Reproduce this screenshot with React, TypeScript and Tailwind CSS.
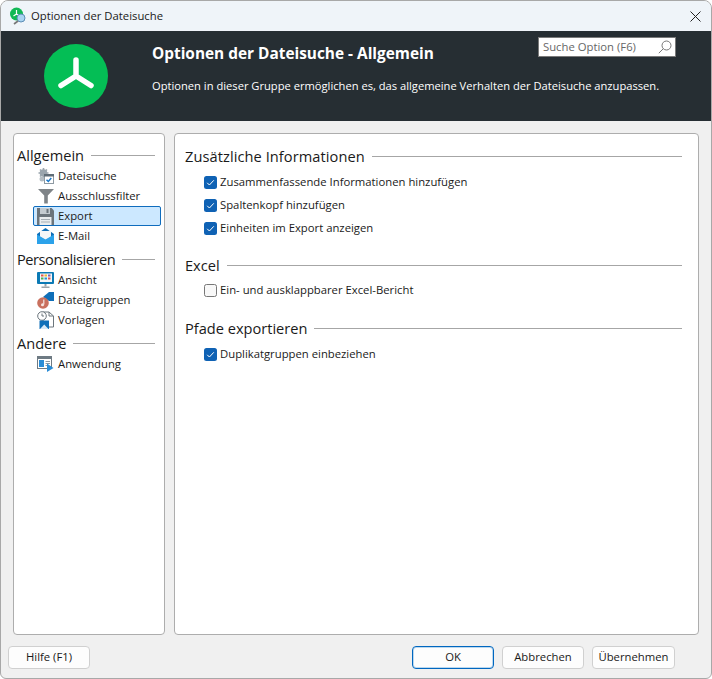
const font = { fontFamily: '"Open Sans", "Noto Sans", sans-serif' };

function Logo() {
  return (
    <svg width="64" height="64" viewBox="0 0 64 64">
      <circle cx="32" cy="32" r="32" fill="#04BE55" />
      <path d="M32 16V32M32 32L17 41.5M32 32L47 41.5" stroke="#fff" strokeWidth="5.5" strokeLinecap="round" fill="none" />
    </svg>
  );
}

function AppIcon() {
  return (
    <svg width="18" height="18" viewBox="0 0 18 18">
      <circle cx="7.5" cy="7" r="6.5" fill="#12b856" />
      <path d="M7.5 3V7M7.5 7L4.5 9M7.5 7L10.5 9" stroke="#fff" strokeWidth="1.2" fill="none" />
      <circle cx="12" cy="11" r="4" fill="#a9d4f2" stroke="#5d8db5" strokeWidth="1" />
      <path d="M9 14L5 17" stroke="#777" strokeWidth="1.6" />
    </svg>
  );
}

function GearsIcon() {
  return (
    <svg width="16" height="16" viewBox="0 0 16 16">
      <circle cx="5.5" cy="5" r="3.8" fill="#9aa5ad" />
      <circle cx="5.5" cy="5" r="1.3" fill="#dfe3e6" />
      <path d="M5.5 0V10M0.5 5H10.500M2 1.500L9 8.500M9 1.500L2 8.500" stroke="#9aa5ad" strokeWidth="1.600" />
      <circle cx="4" cy="11" r="2.500" fill="#b4bdc3" />
      <rect x="6.500" y="6.500" width="9" height="9" fill="#fff" stroke="#8e9aa3" />
      <rect x="6" y="6" width="10" height="2.500" fill="#5f6d77" />
      <path d="M8.500 11.800L10.300 13.500L13.300 10" stroke="#1b78c8" strokeWidth="1.500" fill="none" />
    </svg>
  );
}

function FilterIcon() {
  return (
    <svg width="16" height="16" viewBox="0 0 16 16">
      <path d="M0 1H16L9.800 7.500V15.500H6.200V7.500Z" fill="#7f8488" />
    </svg>
  );
}

function SaveIcon() {
  return (
    <svg width="17" height="17" viewBox="0 0 17 17">
      <path d="M0 0H14.500L17 2.500V17H0Z" fill="#6b747b" />
      <rect x="3" y="0" width="10" height="6" fill="#c4cbd0" />
      <rect x="9.500" y="1" width="2" height="4" fill="#6b747b" />
      <rect x="2.500" y="9" width="12" height="8" fill="#e9ecee" />
      <path d="M4 11.500H13M4 14H13" stroke="#a7afb5" />
    </svg>
  );
}

function MailIcon() {
  return (
    <svg width="17" height="16" viewBox="0 0 17 16">
      <path d="M0 6L8.500 0L17 6V16H0Z" fill="#0f6fb8" />
      <path d="M3 3H14V9L8.500 12L3 9Z" fill="#f3f6f8" />
      <path d="M0 6.500L8.500 11.500L17 6.500V16H0Z" fill="#2ba2ea" />
    </svg>
  );
}

function ViewIcon() {
  return (
    <svg width="17" height="16" viewBox="0 0 17 16">
      <rect x="0" y="0" width="17" height="12" rx="1" fill="#0b7ab5" />
      <rect x="3" y="1.500" width="12" height="8.500" fill="#f4f6f7" />
      <rect x="4" y="2.500" width="2.500" height="2" fill="#e2574c" />
      <rect x="7.500" y="2.500" width="2.500" height="2" fill="#f1b52c" />
      <rect x="11" y="2.500" width="2.500" height="2" fill="#7a5fb5" />
      <rect x="4" y="5.500" width="2.500" height="2" fill="#4caf50" />
      <rect x="7.500" y="5.500" width="2.500" height="2" fill="#2b8fd8" />
      <rect x="11" y="5.500" width="2.500" height="2" fill="#e2574c" />
      <rect x="7.500" y="12" width="2" height="2.500" fill="#9aa3a9" />
      <rect x="4.500" y="14.500" width="8" height="1.500" fill="#9aa3a9" />
    </svg>
  );
}

function GroupsIcon() {
  return (
    <svg width="17" height="17" viewBox="0 0 17 17">
      <path d="M6 5L12 0H17V9H12Z" fill="#0f6fb8" />
      <circle cx="6" cy="11" r="5.800" fill="#c9705e" />
      <path d="M6.800 7.500V12.500" stroke="#f6e7e2" strokeWidth="1.200" />
      <circle cx="5.500" cy="12.700" r="1.500" fill="#f6e7e2" />
    </svg>
  );
}

function TemplatesIcon() {
  return (
    <svg width="17" height="18" viewBox="0 0 17 18">
      <path d="M6 1H12L16.500 5V16H6Z" fill="#fff" stroke="#6c767d" />
      <path d="M12 1V5H16.500" fill="none" stroke="#6c767d" />
      <circle cx="5" cy="5" r="4.300" fill="#fff" stroke="#6c767d" />
      <path d="M5 2.500V5H7" stroke="#6c767d" fill="none" />
      <rect x="2.500" y="9.500" width="9.500" height="8.500" fill="#0f6fb8" />
      <path d="M3 18L7.200 13.500L11.500 18Z" fill="#d8e9f6" />
    </svg>
  );
}

function AppRunIcon() {
  return (
    <svg width="17" height="16" viewBox="0 0 17 16">
      <rect x="0.500" y="0.500" width="14" height="12" fill="#fff" stroke="#6e7a83" />
      <rect x="1" y="1" width="13" height="2" fill="#6e7a83" />
      <rect x="2" y="4" width="5" height="7" fill="#2a8cd6" />
      <path d="M8.500 5.500H13M8.500 7.500H13M8.500 9.500H11" stroke="#8d98a0" />
      <path d="M10 7.500L16.500 12L10 16Z" fill="#2a8cd6" />
    </svg>
  );
}

function Section({ title, side, tight, wide }: { title: string; side?: boolean; tight?: boolean; wide?: boolean }) {
  return (
    <div className={`flex items-center gap-[7px] h-[20px] ${side ? "mr-[6px]" : ""}`}>
      <span
        className={`text-[14.600px] leading-[20px] text-[#1a1a1a] ${tight ? "tracking-[-0.45px]" : ""} ${
          wide ? "tracking-[0.08px]" : ""
        }`}
      >
        {title}
      </span>
      <span className="flex-1 h-px bg-[#a6a6a6] mt-px" />
    </div>
  );
}

function NavItem({ icon, label, active }: { icon: React.ReactNode; label: string; active?: boolean }) {
  return (
    <div
      className={`flex items-center h-[20px] ml-[16px] border rounded-[2px] ${
        active ? "bg-[#cce8ff] border-[#0f6cbd]" : "border-transparent"
      }`}
    >
      <span className="w-[24px] flex justify-center shrink-0 pr-[1px]">{icon}</span>
      <span className="text-[11.300px] leading-[18px] text-[#1a1a1a]">{label}</span>
    </div>
  );
}

function Check({ label, checked = true, mt }: { label: string; checked?: boolean; mt: string }) {
  return (
    <div className={`flex items-center h-[16px] ml-[19px] ${mt}`}>
      {checked ? (
        <svg width="13" height="13" viewBox="0 0 13 13" className="shrink-0">
          <rect width="13" height="13" rx="2.500" fill="#0f62b4" />
          <path d="M3.200 6.800L5.400 9L9.800 4.300" stroke="#fff" strokeWidth="1" fill="none" />
        </svg>
      ) : (
        <span className="w-[13px] h-[13px] rounded-[2.500px] border border-[#777] bg-[#f8f8f8] shrink-0" />
      )}
      <span className="ml-[3px] text-[11.300px] leading-[16px] text-[#1a1a1a]">{label}</span>
    </div>
  );
}

function Btn({ children, className }: { children: React.ReactNode; className: string }) {
  return (
    <div className={`h-[23px] flex items-center justify-center rounded-[4px] bg-[#fdfdfd] text-[11.300px] text-[#1a1a1a] ${className}`}>
      {children}
    </div>
  );
}

export default function App() {
  return (
    <div
      style={font}
      className="w-[712px] h-[679px] flex flex-col overflow-hidden bg-[#f0f0f0] border border-[#a8a8a8] rounded-t-[8px] rounded-b-[6px]"
    >
      <div className="h-[30px] shrink-0 bg-[#eff4f9] flex items-center pl-[8px] pr-[10px]">
        <AppIcon />
        <span className="ml-[4px] text-[11.300px] text-[#1a1a1a] flex-1">Optionen der Dateisuche</span>
        <svg width="11" height="11" viewBox="0 0 11 11">
          <path d="M0.500 0.500L10.500 10.500M10.500 0.500L0.500 10.500" stroke="#222" strokeWidth="1" />
        </svg>
      </div>

      <div className="h-[90px] shrink-0 bg-[#262e33] flex text-white">
        <div className="ml-[43px] mt-[13px]"><Logo /></div>
        <div className="ml-[44px] flex-1 min-w-0">
          <div className="flex items-start pt-[6px] pr-[35px] h-[34px]">
            <div className="flex-1 mt-[6px] text-[15.400px] leading-[22px] font-bold">Optionen der Dateisuche - Allgemein</div>
            <div className="w-[138px] h-[20px] shrink-0 bg-white border border-[#7a7a7a] flex items-center justify-between pl-[4px] pr-[3px]">
              <span className="text-[11.300px] text-[#666] leading-[16px]">Suche Option (F6)</span>
              <svg width="14" height="14" viewBox="0 0 14 14">
                <circle cx="8.500" cy="5.500" r="4.500" fill="none" stroke="#777" />
                <path d="M5.300 8.700L0.800 13.200" stroke="#777" />
              </svg>
            </div>
          </div>
          <div className="mt-[13px] text-[11.170px] leading-[16px]">
            Optionen in dieser Gruppe ermöglichen es, das allgemeine Verhalten der Dateisuche anzupassen.
          </div>
        </div>
      </div>

      <div className="flex-1 min-h-0 flex gap-[9px] pt-[12px] pl-[12px] pr-[12px]">
        <div className="w-[152px] shrink-0 bg-white border border-[#adadad] rounded-[4px] pt-[11px] pl-[3px] pr-[3px]">
          <Section side title="Allgemein" />
          <div className="flex flex-col mt-[1px]">
            <NavItem icon={<GearsIcon />} label="Dateisuche" />
            <NavItem icon={<FilterIcon />} label="Ausschlussfilter" />
            <NavItem active icon={<SaveIcon />} label="Export" />
            <NavItem icon={<MailIcon />} label="E-Mail" />
          </div>
          <div className="mt-[3px]"><Section side tight title="Personalisieren" /></div>
          <div className="flex flex-col mt-[1px]">
            <NavItem icon={<ViewIcon />} label="Ansicht" />
            <NavItem icon={<GroupsIcon />} label="Dateigruppen" />
            <NavItem icon={<TemplatesIcon />} label="Vorlagen" />
          </div>
          <div className="mt-[3px]"><Section side title="Andere" /></div>
          <div className="mt-[1px]"><NavItem icon={<AppRunIcon />} label="Anwendung" /></div>
        </div>

        <div className="flex-1 min-w-0 bg-white border border-[#adadad] rounded-[4px] pt-[12px] pl-[10px] pr-[16px]">
          <Section wide title="Zusätzliche Informationen" />
          <Check mt="mt-[8px]" label="Zusammenfassende Informationen hinzufügen" />
          <Check mt="mt-[7px]" label="Spaltenkopf hinzufügen" />
          <Check mt="mt-[7px]" label="Einheiten im Export anzeigen" />
          <div className="mt-[19px]"><Section title="Excel" /></div>
          <Check mt="mt-[7px]" checked={false} label="Ein- und ausklappbarer Excel-Bericht" />
          <div className="mt-[20px]"><Section title="Pfade exportieren" /></div>
          <Check mt="mt-[8px]" label="Duplikatgruppen einbeziehen" />
        </div>
      </div>

      <div className="h-[43px] shrink-0 flex items-start pt-[11px] pl-[7px]">
        <Btn className="w-[82px] border border-[#d0d0d0]">Hilfe (F1)</Btn>
        <Btn className="w-[82px] ml-[322px] border border-[#0067c0] shadow-[inset_0_0_0_1px_#bcd8ee]">OK</Btn>
        <Btn className="w-[82px] ml-[8px] border border-[#d0d0d0]">Abbrechen</Btn>
        <Btn className="w-[83px] ml-[8px] border border-[#d0d0d0]">Übernehmen</Btn>
      </div>
    </div>
  );
}
